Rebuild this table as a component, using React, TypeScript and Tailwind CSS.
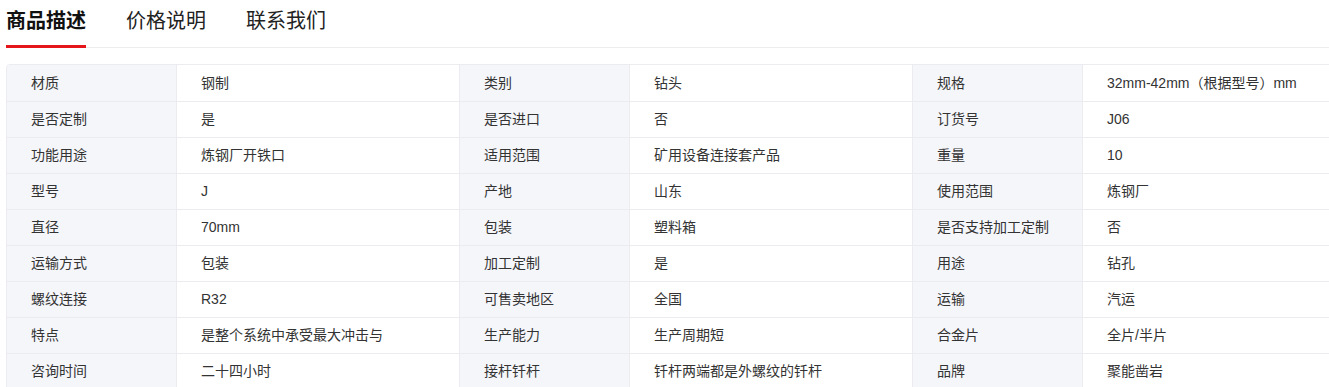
const rows: [string, string, string, string, string, string][] = [
  ["材质", "钢制", "类别", "钻头", "规格", "32mm-42mm（根据型号）mm"],
  ["是否定制", "是", "是否进口", "否", "订货号", "J06"],
  ["功能用途", "炼钢厂开铁口", "适用范围", "矿用设备连接套产品", "重量", "10"],
  ["型号", "J", "产地", "山东", "使用范围", "炼钢厂"],
  ["直径", "70mm", "包装", "塑料箱", "是否支持加工定制", "否"],
  ["运输方式", "包装", "加工定制", "是", "用途", "钻孔"],
  ["螺纹连接", "R32", "可售卖地区", "全国", "运输", "汽运"],
  ["特点", "是整个系统中承受最大冲击与", "生产能力", "生产周期短", "合金片", "全片/半片"],
  ["咨询时间", "二十四小时", "接杆钎杆", "钎杆两端都是外螺纹的钎杆", "品牌", "聚能凿岩"],
];

const tabs = ["商品描述", "价格说明", "联系我们"];

export default function App() {
  return (
    <div className="w-[1329px] h-[387px] overflow-hidden bg-white font-['Liberation_Sans','Noto_Sans_CJK_SC',sans-serif] text-[#333]">
      <div className="pl-[6px]">
        {/* tabs */}
        <div className="flex border-b border-[#ececec] h-[48px]">
          {tabs.map((t, i) => (
            <div
              key={t}
              className={
                i === 0
                  ? "mr-[40px] h-[48px] pt-[8px] text-[20px] leading-[26px] font-bold text-[#111] border-b-[3px] border-[#e4161b] -mb-px"
                  : "mr-[40px] h-[48px] pt-[8px] text-[20px] leading-[26px] text-[#222]"
              }
            >
              {t}
            </div>
          ))}
        </div>

        {/* spec table */}
        <div className="mt-[16px] w-[1359px] border border-[#ebebf0] rounded-[4px] overflow-hidden">
          {rows.map((r, i) => (
            <div
              key={i}
              className={
                i === 0
                  ? "grid grid-cols-[170px_283px_170px_283px_170px_283px] h-[36px] text-[14px]"
                  : "grid grid-cols-[170px_283px_170px_283px_170px_283px] h-[36px] text-[14px] border-t border-[#ebebf0]"
              }
            >
              {r.map((c, j) => (
                <div
                  key={j}
                  className={
                    j % 2 === 0
                      ? "bg-[#f5f6fa] pl-[24px] flex items-center border-r border-[#ebebf0]"
                      : "bg-white pl-[24px] flex items-center border-r border-[#ebebf0] last:border-r-0"
                  }
                >
                  {c}
                </div>
              ))}
            </div>
          ))}
        </div>
      </div>
    </div>
  );
}
